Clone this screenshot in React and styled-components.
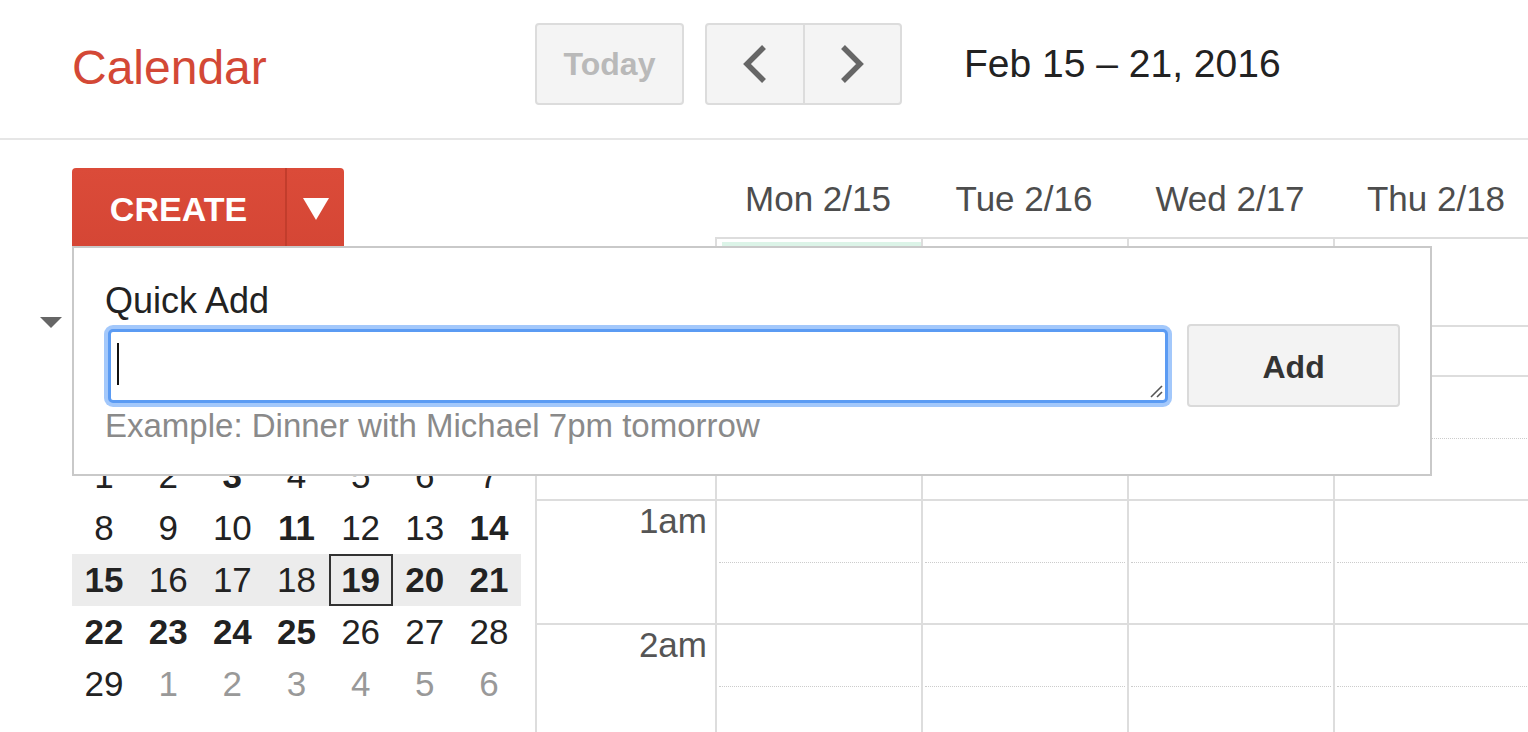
import React from 'react'
import styled, { createGlobalStyle } from 'styled-components'

const GlobalStyle = createGlobalStyle`
  html, body { margin: 0; padding: 0; background: #fff; }
  body { font-family: "Liberation Sans", Arial, sans-serif; overflow: hidden; }
`

const days = ['Mon 2/15', 'Tue 2/16', 'Wed 2/17', 'Thu 2/18', '']
const hours = ['', '1am', '2am']

// [day, bold, muted]
const weeks = [
  [[1], [2], [3, 1], [4], [5], [6], [7]],
  [[8], [9], [10], [11, 1], [12], [13], [14, 1]],
  [[15, 1], [16], [17], [18], [19, 1], [20, 1], [21, 1]],
  [[22, 1], [23, 1], [24, 1], [25, 1], [26], [27], [28]],
  [[29], [1, 0, 1], [2, 0, 1], [3, 0, 1], [4, 0, 1], [5, 0, 1], [6, 0, 1]],
]

const Chevron = ({ dir }) => (
  <svg width="28" height="42" viewBox="0 0 28 42">
    <polyline
      points={dir === 'left' ? '23,4 6,21 23,38' : '5,4 22,21 5,38'}
      fill="none"
      stroke="#666"
      strokeWidth="5.5"
    />
  </svg>
)

const App = () => {
  return (
    <Page>
      <GlobalStyle />
      <TopBar>
        <Brand>Calendar</Brand>
        <TodayButton>Today</TodayButton>
        <NavGroup>
          <NavBtn first>
            <Chevron dir="left" />
          </NavBtn>
          <NavBtn>
            <Chevron dir="right" />
          </NavBtn>
        </NavGroup>
        <DateRange>Feb 15 – 21, 2016</DateRange>
      </TopBar>

      <Body>
        <Sidebar>
          <CreateWrap>
            <CreateSplit>
              <CreateMain>CREATE</CreateMain>
              <CreateArrow>
                <svg width="26" height="22" viewBox="0 0 26 22">
                  <polygon points="0,0 26,0 13,22" fill="#fff" />
                </svg>
              </CreateArrow>
            </CreateSplit>

            <QuickAdd>
              <QuickLabel>Quick Add</QuickLabel>
              <InputRow>
                <FakeInput>
                  <Caret />
                  <Grip width="14" height="14" viewBox="0 0 14 14">
                    <line x1="13" y1="2" x2="2" y2="13" stroke="#555" strokeWidth="1.6" />
                    <line x1="13" y1="8" x2="8" y2="13" stroke="#555" strokeWidth="1.6" />
                  </Grip>
                </FakeInput>
                <AddButton>Add</AddButton>
              </InputRow>
              <Example>Example: Dinner with Michael 7pm tomorrow</Example>
            </QuickAdd>
          </CreateWrap>

          <MonthHead>
            <svg width="22" height="11" viewBox="0 0 22 11">
              <polygon points="0,0 22,0 11,11" fill="#666" />
            </svg>
          </MonthHead>

          <DowSpacer />
          {weeks.map((w, wi) => (
            <MiniGrid key={wi} current={wi === 2}>
              {w.map(([n, bold, muted], i) => (
                <DayNum key={i} bold={bold} muted={muted} today={wi === 2 && n === 19}>
                  {n}
                </DayNum>
              ))}
            </MiniGrid>
          ))}
        </Sidebar>

        <Main>
          <GridRow>
            <Gutter plain />
            {days.map((d, i) => (
              <DayHead key={i}>{d}</DayHead>
            ))}
          </GridRow>

          <GridRow>
            <Gutter plain />
            {days.map((d, i) => (
              <AllDayCell key={i}>{i === 0 && <Chip />}</AllDayCell>
            ))}
          </GridRow>

          <GridRow>
            <Gutter h={50} />
            {days.map((d, i) => (
              <Slot key={i} h={50} />
            ))}
          </GridRow>

          {hours.map((h, hi) => (
            <GridRow key={hi}>
              <Gutter h={124}>{h && <TimeLabel>{h}</TimeLabel>}</Gutter>
              {days.map((d, i) => (
                <Slot key={i} h={124}>
                  <Half />
                  <Half dotted />
                </Slot>
              ))}
            </GridRow>
          ))}
        </Main>
      </Body>
    </Page>
  )
}

export default App

const Page = styled.div`
  width: 1528px;
  height: 732px;
  overflow: hidden;
`

const TopBar = styled.header`
  height: 140px;
  box-sizing: border-box;
  padding-bottom: 10px;
  border-bottom: 2px solid #e6e6e6;
  display: flex;
  align-items: center;
`

const Brand = styled.div`
  width: 535px;
  box-sizing: border-box;
  padding-left: 72px;
  margin-top: 6px;
  font-size: 48px;
  color: #d34836;
`

const TodayButton = styled.div`
  width: 149px;
  height: 82px;
  box-sizing: border-box;
  border: 2px solid #dcdcdc;
  border-radius: 4px;
  background: #f4f4f4;
  display: flex;
  align-items: center;
  justify-content: center;
  font-size: 32px;
  font-weight: bold;
  color: #b9b9b9;
  margin-right: 21px;
`

const NavGroup = styled.div`
  width: 197px;
  height: 82px;
  box-sizing: border-box;
  border: 2px solid #dcdcdc;
  border-radius: 4px;
  background: #f4f4f4;
  display: flex;
  overflow: hidden;
`

const NavBtn = styled.div`
  flex: 1;
  display: flex;
  align-items: center;
  justify-content: center;
  border-right: ${(p) => (p.first ? '2px solid #dcdcdc' : 'none')};
`

const DateRange = styled.div`
  margin-left: 62px;
  font-size: 39px;
  color: #222;
`

const Body = styled.div`
  display: flex;
`

const Sidebar = styled.aside`
  width: 535px;
  flex-shrink: 0;
  box-sizing: border-box;
  padding: 28px 0 0 72px;
`

const CreateWrap = styled.div`
  position: relative;
  width: 272px;
  z-index: 5;
`

const CreateSplit = styled.div`
  display: flex;
  height: 78px;
  background: linear-gradient(#db4b39, #d54635);
  border-radius: 4px 4px 0 0;
`

const CreateMain = styled.div`
  width: 213px;
  display: flex;
  align-items: center;
  justify-content: center;
  padding-top: 4px;
  box-sizing: border-box;
  font-size: 34px;
  font-weight: bold;
  color: #fff;
`

const CreateArrow = styled.div`
  flex: 1;
  border-left: 2px solid #c23d2c;
  display: flex;
  align-items: center;
  justify-content: center;
  padding-top: 4px;
`

const QuickAdd = styled.div`
  position: absolute;
  top: 78px;
  left: 0;
  width: 1360px;
  box-sizing: border-box;
  border: 2px solid #c9c9c9;
  background: #fff;
  padding: 33px 30px 30px 31px;
`

const QuickLabel = styled.div`
  font-size: 36px;
  line-height: 40px;
  color: #222;
`

const InputRow = styled.div`
  display: flex;
  align-items: center;
  gap: 16px;
  margin-top: 3px;
`

const FakeInput = styled.div`
  position: relative;
  width: 1061px;
  height: 74px;
  margin: 3px;
  box-sizing: border-box;
  border: 3px solid #5b9bf3;
  border-radius: 5px;
  box-shadow: 0 0 0 4px rgba(140, 186, 250, 0.8);
  background: #fff;
  padding: 11px 6px;
`

const Caret = styled.div`
  width: 2px;
  height: 42px;
  background: #111;
`

const Grip = styled.svg`
  position: absolute;
  right: 2px;
  bottom: 2px;
`

const AddButton = styled.div`
  width: 213px;
  height: 83px;
  box-sizing: border-box;
  border: 2px solid #dadada;
  border-radius: 4px;
  background: #f3f3f3;
  display: flex;
  align-items: center;
  justify-content: center;
  padding-top: 4px;
  font-size: 32px;
  font-weight: bold;
  color: #333;
`

const Example = styled.div`
  margin-top: 1px;
  font-size: 33px;
  line-height: 36px;
  color: #8a8a8a;
`

const MonthHead = styled.div`
  display: flex;
  align-items: center;
  height: 52px;
  margin: 50px 0 0 -32px;
`

const DowSpacer = styled.div`
  height: 102px;
`

const MiniGrid = styled.div`
  width: 449px;
  display: grid;
  grid-template-columns: repeat(7, 1fr);
  background: ${(p) => (p.current ? '#ececec' : 'transparent')};
`

const DayNum = styled.div`
  height: 52px;
  line-height: 48px;
  box-sizing: border-box;
  text-align: center;
  font-size: 35px;
  font-weight: ${(p) => (p.bold ? 'bold' : 'normal')};
  color: ${(p) => (p.muted ? '#999' : '#222')};
  border: 2px solid ${(p) => (p.today ? '#333' : 'transparent')};
`

const Main = styled.main`
  flex: 1;
  overflow: hidden;
`

const GridRow = styled.div`
  display: grid;
  grid-template-columns: 180px repeat(5, 206px);
`

const Gutter = styled.div`
  box-sizing: border-box;
  height: ${(p) => (p.h ? `${p.h}px` : 'auto')};
  border-left: ${(p) => (p.plain ? 'none' : '2px solid #dddddd')};
  border-top: ${(p) => (p.plain ? 'none' : '2px solid #dddddd')};
  padding: 2px 8px 0 0;
  text-align: right;
`

const TimeLabel = styled.div`
  font-size: 35px;
  line-height: 36px;
  color: #555;
`

const DayHead = styled.div`
  height: 97px;
  box-sizing: border-box;
  padding-top: 39px;
  text-align: center;
  font-size: 35px;
  line-height: 40px;
  color: #4d4d4d;
`

const AllDayCell = styled.div`
  height: 88px;
  box-sizing: border-box;
  border-top: 2px solid #dddddd;
  border-left: 2px solid #dddddd;
  padding: 3px 0 0 5px;
`

const Chip = styled.div`
  height: 30px;
  background: #dcf4e8;
`

const Slot = styled.div`
  height: ${(p) => p.h}px;
  box-sizing: border-box;
  border-top: 2px solid #dddddd;
  border-left: 2px solid #dddddd;
  display: flex;
  flex-direction: column;
`

const Half = styled.div`
  flex: 1;
  border-top: ${(p) => (p.dotted ? '1px dotted #cccccc' : 'none')};
  margin: 0 2px;
`
